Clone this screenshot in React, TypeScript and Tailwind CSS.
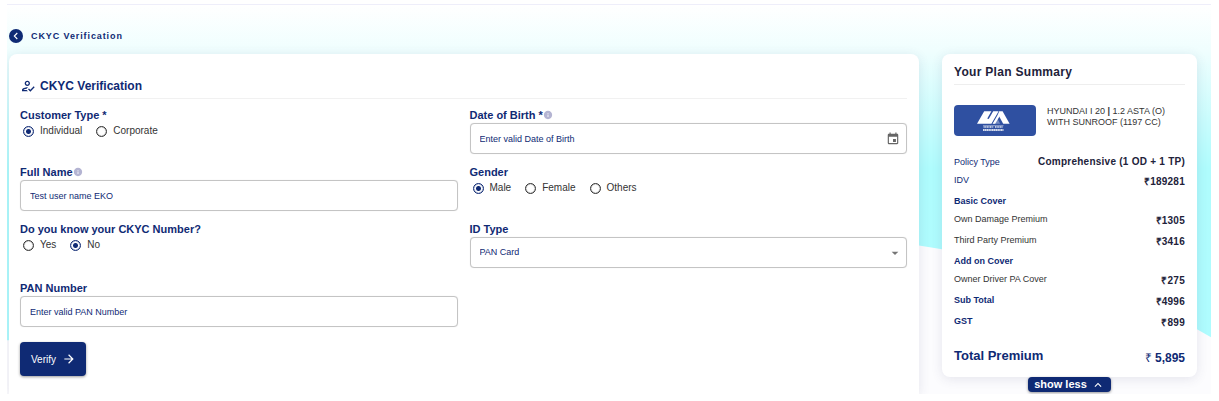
import { useState } from "react";
import type { ReactNode } from "react";
import {
  MdArrowDropDown,
  MdArrowForward,
  MdEvent,
  MdInfo,
  MdKeyboardArrowUp,
  MdOutlineHowToReg,
} from "react-icons/md";

const fieldBox =
  "h-[31px] w-full rounded border border-[#c4c4c4] bg-white text-[9px] text-[#0f2a74] shadow-[0_0_1px_rgba(0,0,0,0.15)]";

function Wave() {
  return (
    <svg
      className="absolute inset-0 h-full w-full"
      viewBox="0 0 1204 390"
      preserveAspectRatio="none"
      aria-hidden="true"
    >
      <defs>
        <linearGradient id="sky" x1="0" y1="0" x2="0" y2="390" gradientUnits="userSpaceOnUse">
          <stop offset="0" stopColor="#ffffff" />
          <stop offset="0.12" stopColor="#effefe" />
          <stop offset="0.3" stopColor="#c8fcfd" />
          <stop offset="0.42" stopColor="#affcfd" />
          <stop offset="1" stopColor="#affcff" />
        </linearGradient>
      </defs>
      <path
        d="M0 0H1204V333L1190 325C1120 286 1040 256 935 245L912 241C600 200 300 240 40 336H0Z"
        fill="url(#sky)"
      />
    </svg>
  );
}

function Label({ htmlFor, info, children }: { htmlFor: string; info?: boolean; children: ReactNode }) {
  return (
    <label htmlFor={htmlFor} className="flex h-4 items-center text-[11px] leading-4 font-bold text-[#0f2a74]">
      {children}
      {info && <MdInfo className="size-[10px] text-[#b4b4d2]" />}
    </label>
  );
}

function RadioGroup({ legend, name, options, initial }: { legend: string; name: string; options: string[]; initial: string }) {
  const [value, setValue] = useState(initial);
  return (
    <fieldset>
      <legend className="h-4 text-[11px] leading-4 font-bold text-[#0f2a74]">{legend}</legend>
      <div className="flex h-4 items-center gap-3.5 pl-[3px]">
        {options.map((option) => (
          <label key={option} className="flex items-center gap-1.5 text-[10px] leading-4 text-[#333333]">
            <input
              type="radio"
              name={name}
              value={option}
              checked={value === option}
              onChange={() => setValue(option)}
              className="size-[11px] appearance-none rounded-full border border-[#333333] bg-white shadow-[inset_0_0_1px_#333333] checked:border-[#0f2a74] checked:bg-[radial-gradient(circle,#0f2a74_0_2px,transparent_3px)] checked:shadow-[inset_0_0_1px_#0f2a74]"
            />
            {option}
          </label>
        ))}
      </div>
    </fieldset>
  );
}

function InsurerLogo() {
  return (
    <svg className="h-[31px] w-[82px] shrink-0 rounded" viewBox="0 0 82 31" role="img" aria-label="United India">
      <rect width="82" height="31" fill="#2f50a1" />
      <g fill="#ffffff">
        <path d="M23 18.8L30.2 6.3H37.4L33.4 13.2Q33.6 14.6 35 13.4L39.2 6.3H44.6L37.4 18.8Z" />
        <path d="M38.8 18.8L45.8 6.6L46.8 8.6L43.6 14L46.2 18.8Z" opacity="0.35" />
        <path d="M38.6 18.8L44.4 8.8L45.6 11.2L41.2 18.8Z" />
        <path d="M45.2 6.3H48.6L55.6 18.8H49.2L44 9.2Z" />
      </g>
      <g stroke="#ffffff" fill="none">
        <path d="M29 20.7H49.5" strokeWidth="0.6" opacity="0.8" />
        <path d="M29.6 22H39.4M41 22H48.6" strokeWidth="1.8" strokeDasharray="1.1 0.5" opacity="0.65" />
        <path d="M29 25H49.5" strokeWidth="1.8" strokeDasharray="1.5 0.3" opacity="0.8" />
      </g>
    </svg>
  );
}

function Item({ label, value, accent }: { label: string; value: string; accent?: "bold" | "plain" }) {
  const tone =
    accent === "bold" ? "font-bold text-[#0f2a74]" : accent === "plain" ? "text-[#0f2a74]" : "text-[#333333]";
  return (
    <div className="flex h-[21px] items-start justify-between leading-4">
      <dt className={`text-[9px] ${tone}`}>{label}</dt>
      <dd className="pt-0.5 text-[10px] font-bold tracking-wide text-[#22223a]">{value}</dd>
    </div>
  );
}

function Group({ children }: { children: ReactNode }) {
  return <h3 className="h-[18px] text-[9px] leading-4 font-bold text-[#0f2a74]">{children}</h3>;
}

export default function App() {
  const [open, setOpen] = useState(true);
  return (
    <div className="h-screen overflow-hidden bg-white pt-1 pr-2 pb-[7px] pl-[7px] font-['Liberation_Sans',Arial,sans-serif]">
      <div className="relative h-full overflow-hidden border-t border-[#eeeefa] bg-[#fcfcfe]">
        <Wave />
        <div className="relative flex h-full flex-col pr-3.5 pl-0.5">
          <header className="flex h-[49px] shrink-0 items-center gap-2 pt-3">
            <button type="button" aria-label="Back" className="flex size-3.5 items-center justify-center rounded-full bg-[#0f2a74]">
              <svg className="size-3.5" viewBox="0 0 14 14" fill="none" stroke="#ffffff" strokeWidth="1.1" aria-hidden="true">
                <path d="M8.3 4L5.3 7L8.3 10" />
              </svg>
            </button>
            <h1 className="text-[9px] leading-4 font-bold tracking-widest text-[#0f2a74]">CKYC Verification</h1>
          </header>

          <div className="flex min-h-0 flex-1 items-start gap-[23px]">
            <main className="min-h-full flex-1 rounded-t-lg bg-white pt-6 pr-3 pl-[11px] shadow-[0_2px_12px_rgba(60,60,110,0.12)]">
              <div className="flex h-[21px] items-start gap-1 border-b border-[#f1f1f1] text-[#0f2a74]">
                <MdOutlineHowToReg className="size-4" />
                <h2 className="text-xs leading-4 font-bold">CKYC Verification</h2>
              </div>
              <form className="pt-2" onSubmit={(e) => e.preventDefault()}>
                <div className="grid grid-cols-2 gap-x-3 gap-y-2.5">
                  <RadioGroup legend="Customer Type *" name="customer" options={["Individual", "Corporate"]} initial="Individual" />
                  <div>
                    <Label htmlFor="dob" info>
                      Date of Birth *
                    </Label>
                    <div className={`${fieldBox} flex items-center pr-1.5`}>
                      <input
                        id="dob"
                        type="text"
                        placeholder="Enter valid Date of Birth"
                        className="h-full min-w-0 flex-1 bg-transparent px-[9px] outline-none placeholder:text-[#0f2a74]"
                      />
                      <button type="button" aria-label="Choose date" className="text-[#666666]">
                        <MdEvent className="size-3.5" />
                      </button>
                    </div>
                  </div>
                  <div>
                    <Label htmlFor="name" info>
                      Full Name
                    </Label>
                    <input id="name" type="text" defaultValue="Test user name EKO" className={`${fieldBox} block px-[9px]`} />
                  </div>
                  <RadioGroup legend="Gender" name="gender" options={["Male", "Female", "Others"]} initial="Male" />
                  <RadioGroup legend="Do you know your CKYC Number?" name="ckyc" options={["Yes", "No"]} initial="No" />
                  <div>
                    <Label htmlFor="idtype">ID Type</Label>
                    <div className="relative">
                      <select id="idtype" className={`${fieldBox} block appearance-none px-[9px]`}>
                        <option>PAN Card</option>
                      </select>
                      <MdArrowDropDown className="pointer-events-none absolute top-2 right-1 size-4 text-[#757575]" />
                    </div>
                  </div>
                </div>
                <div className="mt-3 grid grid-cols-2 gap-x-3">
                  <div>
                    <Label htmlFor="pan">PAN Number</Label>
                    <input
                      id="pan"
                      type="text"
                      placeholder="Enter valid PAN Number"
                      className={`${fieldBox} block px-[9px] placeholder:text-[#0f2a74]`}
                    />
                  </div>
                </div>
                <button
                  type="submit"
                  className="mt-[15px] flex h-[34px] items-center gap-1.5 rounded-sm bg-[#0f2a74] pr-2.5 pl-[11px] text-[10px] text-white shadow-[0_1px_3px_rgba(0,0,0,0.4)]"
                >
                  Verify
                  <MdArrowForward className="size-3.5" />
                </button>
              </form>
            </main>

            <aside className="w-[255px] shrink-0">
              <div className="rounded-lg bg-white px-3 pt-2.5 pb-[7px] shadow-[0_2px_12px_rgba(60,60,110,0.12)]">
                <h2 className="h-[21px] border-b border-[#eeeeee] text-xs leading-4 font-bold tracking-wide text-[#22223a]">
                  Your Plan Summary
                </h2>
                <div className="mt-5 flex items-start gap-[11px]">
                  <InsurerLogo />
                  <p className="pt-px text-[9px] leading-[11px] text-[#333333]">
                    HYUNDAI I 20 <b>|</b> 1.2 ASTA (O)
                    <br />
                    WITH SUNROOF (1197 CC)
                  </p>
                </div>
                {open && (
                  <dl className="pt-[18px]">
                    <div className="flex h-[18px] justify-between leading-4">
                      <dt className="text-[9px] text-[#0f2a74]">Policy Type</dt>
                      <dd className="text-[10px] font-bold tracking-wide text-[#22223a]">Comprehensive (1 OD + 1 TP)</dd>
                    </div>
                    <Item label="IDV" value="₹189281" accent="plain" />
                    <Group>Basic Cover</Group>
                    <Item label="Own Damage Premium" value="₹1305" />
                    <Item label="Third Party Premium" value="₹3416" />
                    <Group>Add on Cover</Group>
                    <Item label="Owner Driver PA Cover" value="₹275" />
                    <Item label="Sub Total" value="₹4996" accent="bold" />
                    <Item label="GST" value="₹899" accent="bold" />
                  </dl>
                )}
                <div className="mt-3 flex items-start justify-between leading-5 font-bold text-[#0f2a74]">
                  <span className="text-[13px]">Total Premium</span>
                  <span className="text-xs leading-6">
                    <span className="font-normal">₹</span> 5,895
                  </span>
                </div>
              </div>
              <button
                type="button"
                onClick={() => setOpen(!open)}
                className="mx-auto flex h-[15px] items-center gap-1 rounded-sm bg-[#0f2a74] px-1.5 text-[11px] font-bold text-white shadow-[0_1px_3px_rgba(0,0,0,0.4)]"
              >
                {open ? "show less" : "show more"}
                <MdKeyboardArrowUp className={open ? "size-3.5" : "size-3.5 rotate-180"} />
              </button>
            </aside>
          </div>
        </div>
      </div>
    </div>
  );
}
